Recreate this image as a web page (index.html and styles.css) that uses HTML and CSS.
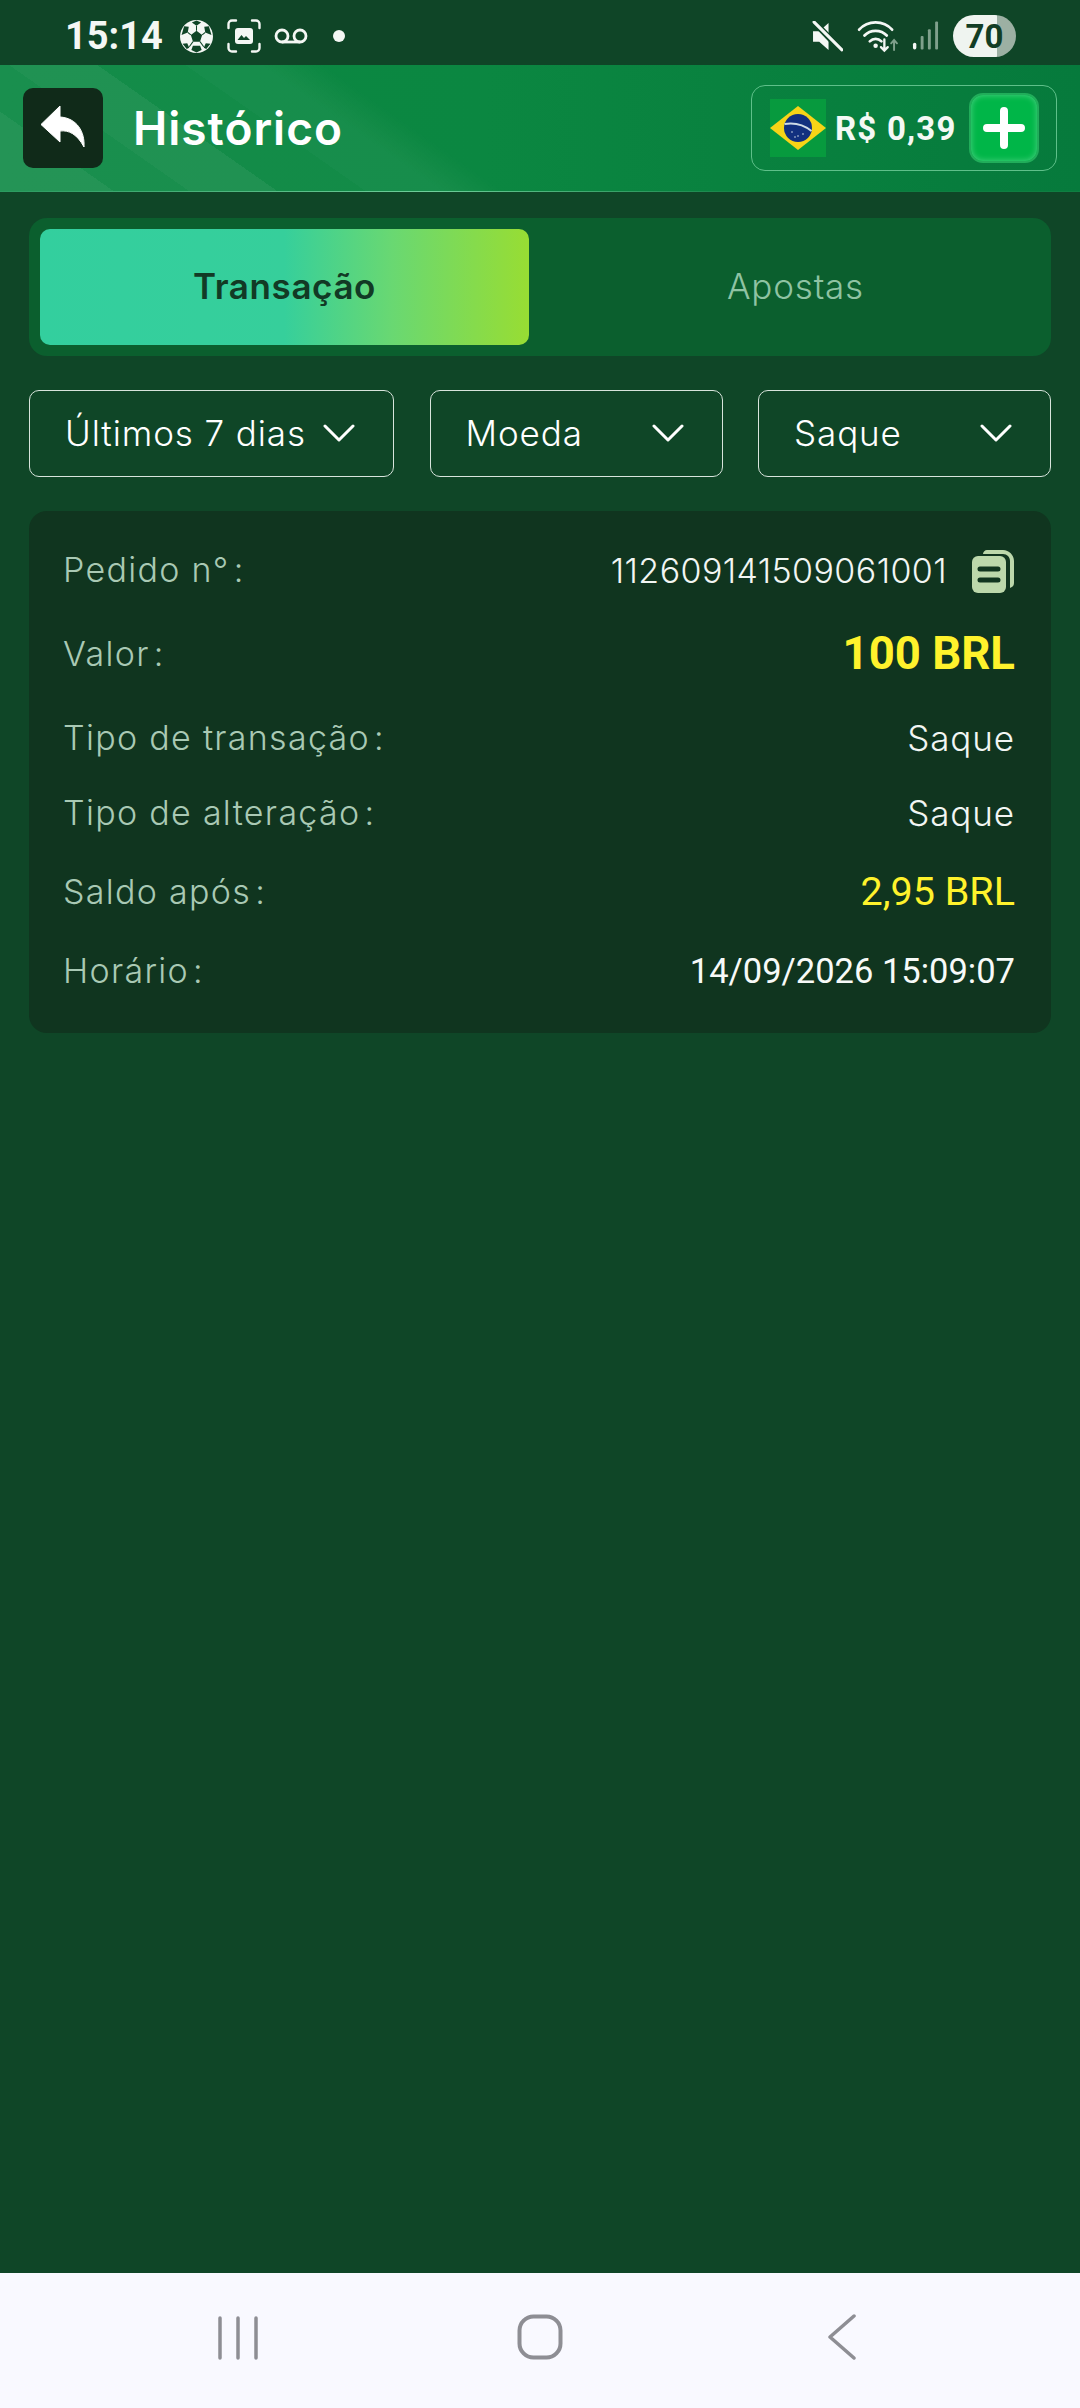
FILE: index.html
```html
<!DOCTYPE html>
<html lang="pt">
<head>
<meta charset="utf-8">
<title>Histórico</title>
<link rel="stylesheet" href="styles.css">
</head>
<body>
<div class="screen">
  <div class="status">
    <div class="status-left">
      <span class="clock">15:14</span>
      <svg class="st-ball" viewBox="0 0 32 32"><circle cx="16" cy="16" r="16" fill="#f4f7f4"/><path d="M16 10.500l5.500 4-2.100 6.500h-6.800l-2.100-6.500zM16 0.500l-4.500 2 4.500 3 4.500-3zM28 6l-4.500.5 1 5.500 6 2.500zM4 6l4.500.5-1 5.500-6 2.500zM11 29l1.500-4h7l1.500 4-5 2.500zM2.500 23l4.500-.5 2 4.500-2.500 1zM29.500 23l-4.500-.5-2 4.500 2.500 1z" fill="#0f4527"/><path d="M16 5.500v5M7.500 12l3 2.500M24.500 12l-3 2.500M12.600 21l-3.600 5M19.400 21l3.600 5" stroke="#0f4527" stroke-width="1"/></svg>
      <svg class="st-shot" viewBox="0 0 34 34" fill="none" stroke="#f4f7f4" stroke-width="2.400" stroke-linecap="round"><path d="M1.500 9V5a3.500 3.500 0 0 1 3.500-3.500h4M25 1.500h4A3.500 3.500 0 0 1 32.500 5v4M32.500 25v4a3.500 3.500 0 0 1-3.500 3.500h-4M9 32.500H5A3.500 3.500 0 0 1 1.500 29v-4"/><rect x="8" y="9" width="18" height="16" rx="3" fill="#f4f7f4" stroke="none"/><path d="M10.500 21l4-5 2.500 3 2-2 4 4z" fill="#0f4527" stroke="none"/></svg>
      <svg class="st-vm" viewBox="0 0 34 16" fill="none" stroke="#f4f7f4" stroke-width="2.800"><circle cx="8" cy="8" r="6"/><circle cx="26" cy="8" r="6"/><path d="M8 14h18"/></svg>
      <span class="st-dot"></span>
    </div>
    <div class="status-right">
      <svg class="st-mute" viewBox="0 0 30 30"><path d="M1 10h6l9-8v26l-9-8H1z" fill="#f4f7f4"/><path d="M3 2l26 27" stroke="#0f4527" stroke-width="6"/><path d="M2 1l27 27" stroke="#f4f7f4" stroke-width="3" stroke-linecap="round"/></svg>
      <svg class="st-wifi" viewBox="0 0 46 34" fill="none" stroke-linecap="round"><path d="M2 10C11 0 27 0 36 10M7.500 16c6-6.500 17-6.500 23 0M13 22c3.500-3.500 8.500-3.500 12 0" stroke="#f4f7f4" stroke-width="2.800"/><circle cx="19" cy="26.500" r="2.300" fill="#f4f7f4"/><path d="M28 20v11M24.500 28l3.500 3.500 3.500-3.500" stroke="#f4f7f4" stroke-width="2.400"/><path d="M38 31V21M35 24l3-3.500 3 3.500" stroke="#7fa08c" stroke-width="2"/></svg>
      <svg class="st-signal" viewBox="0 0 28 30" fill="#7fa08c"><rect x="1" y="22" width="3.500" height="7" rx="1.700" fill="#f4f7f4"/><rect x="9" y="15" width="3" height="14" rx="1"/><rect x="16.500" y="8" width="3" height="21" rx="1"/><rect x="24" y="0" width="3" height="29" rx="1"/></svg>
      <div class="battery"><span class="battery-num">70</span></div>
    </div>
  </div>

  <header class="topbar">
    <div class="topbar-left">
      <button class="back" type="button" aria-label="Voltar">
        <svg viewBox="0 0 46 46" width="46" height="46"><path d="M20 1L1 19.500 20 37V26c9-1 17 3 24 16 1-15-7-29-24-30z" fill="#fff" stroke="#fff" stroke-width="1" stroke-linejoin="round"/></svg>
      </button>
      <h1 class="title">Histórico</h1>
    </div>
    <div class="wallet">
      <svg class="flag" viewBox="0 0 56 58"><rect width="56" height="58" fill="#079a3e"/><path d="M28 7l28 22-28 22L0 29z" fill="#f7d417"/><circle cx="28" cy="29" r="14" fill="#12307f"/><path d="M14.500 25c9-1.500 19 .5 27 7" fill="none" stroke="#cfdbe6" stroke-width="2"/><g fill="#cfdbe6"><circle cx="22" cy="33" r=".8"/><circle cx="28" cy="37" r=".8"/><circle cx="33" cy="35" r=".8"/><circle cx="25" cy="38" r=".8"/></g></svg>
      <span class="wallet-amount">R$ 0,39</span>
      <button class="plus" type="button" aria-label="Adicionar">
        <svg viewBox="0 0 42 42" width="42" height="42"><path d="M21 4v34M4 21h34" stroke="#fff" stroke-width="8" stroke-linecap="round"/></svg>
      </button>
    </div>
  </header>

  <main class="content">
    <div class="tabs">
      <div class="tab tab-active">Transação</div>
      <div class="tab tab-idle">Apostas</div>
    </div>

    <div class="filters">
      <div class="filter filter-a"><span>Últimos 7 dias</span><svg class="chev" viewBox="0 0 32 18"><path d="M2 2l14 14L30 2" fill="none" stroke="#fff" stroke-width="3" stroke-linecap="round" stroke-linejoin="round"/></svg></div>
      <div class="filter filter-b"><span>Moeda</span><svg class="chev" viewBox="0 0 32 18"><path d="M2 2l14 14L30 2" fill="none" stroke="#fff" stroke-width="3" stroke-linecap="round" stroke-linejoin="round"/></svg></div>
      <div class="filter filter-c"><span>Saque</span><svg class="chev" viewBox="0 0 32 18"><path d="M2 2l14 14L30 2" fill="none" stroke="#fff" stroke-width="3" stroke-linecap="round" stroke-linejoin="round"/></svg></div>
    </div>

    <section class="card">
      <div class="row row-1">
        <span class="label">Pedido n°<span class="colon">:</span></span>
        <span class="value order">112609141509061001
          <svg class="copy" viewBox="0 0 44 46"><path d="M16 2h16c6 0 11 5 11 11v22c0 2-1 4-4 5V13c0-4-3-7-7-7H12c0-2 2-4 4-4z" fill="#bcd8ab"/><rect x="1" y="8" width="34" height="37" rx="6" fill="#bcd8ab"/><path d="M9 21h18M9 32h18" stroke="#10351f" stroke-width="5" stroke-linecap="round"/></svg>
        </span>
      </div>
      <div class="row row-2"><span class="label">Valor<span class="colon">:</span></span><span class="value amount">100 BRL</span></div>
      <div class="row row-3"><span class="label">Tipo de transação<span class="colon">:</span></span><span class="value">Saque</span></div>
      <div class="row row-4"><span class="label">Tipo de alteração<span class="colon">:</span></span><span class="value">Saque</span></div>
      <div class="row row-5"><span class="label">Saldo após<span class="colon">:</span></span><span class="value balance">2,95 BRL</span></div>
      <div class="row row-6"><span class="label">Horário<span class="colon">:</span></span><span class="value time">14/09/2026 15:09:07</span></div>
    </section>
  </main>

  <nav class="navbar">
    <svg class="nav-recent" viewBox="0 0 42 44" fill="none" stroke="#8e8e94" stroke-width="3.500" stroke-linecap="round"><path d="M3 2v40M21 2v40M39 2v40"/></svg>
    <svg class="nav-home" viewBox="0 0 46 46" fill="none" stroke="#8e8e94" stroke-width="4"><rect x="2.500" y="2.500" width="41" height="41" rx="14"/></svg>
    <svg class="nav-back" viewBox="0 0 30 46" fill="none" stroke="#8e8e94" stroke-width="3.500" stroke-linecap="round" stroke-linejoin="round"><path d="M27 2L3 23l24 21"/></svg>
  </nav>
</div>
</body>
</html>
```

FILE: styles.css
```css
* { box-sizing: border-box; }
html, body { margin: 0; padding: 0; }
body { font-family: "Inter", "Liberation Sans", sans-serif; background: #0f4627; }
.screen { width: 1080px; height: 2408px; display: flex; flex-direction: column; background: #0f4627; overflow: hidden; }

.status { height: 65px; flex: none; display: flex; justify-content: space-between; align-items: center; padding: 7px 64px 0 65px; background: #0f4527; color: #f4f7f4; }
.status-left, .status-right { display: flex; align-items: center; }
.clock { font: 700 38px/1 "Roboto", sans-serif; width: 115px; }
.st-ball { width: 33px; height: 33px; margin-right: 14px; }
.st-shot { width: 34px; height: 34px; margin-right: 13px; }
.st-vm { width: 34px; height: 16px; margin-right: 25px; }
.st-dot { width: 12px; height: 12px; border-radius: 50%; background: #f4f7f4; }
.st-mute { width: 31px; height: 31px; margin-right: 14px; }
.st-wifi { width: 45px; height: 33px; margin-right: 10px; }
.st-signal { width: 27px; height: 30px; margin-right: 14px; }
.battery { width: 63px; height: 42px; border-radius: 21px; display: flex; align-items: center; justify-content: center; background: linear-gradient(90deg, #eff4f0 0 44px, #9cb0a3 44px); }
.battery-num { font: 700 33px/1 "Roboto", sans-serif; color: #123d25; }

.topbar { height: 127px; flex: none; display: flex; justify-content: space-between; align-items: center; padding: 0 23px 0 23px; border-bottom: 1px solid transparent; border-image: linear-gradient(90deg, #2a9a5f, #6fcf9b 40%, #0f7f42 70%) 1;
  background:
    linear-gradient(35deg, rgba(255,255,255,.10) 0 9%, rgba(255,255,255,.06) 9% 15%, rgba(255,255,255,.085) 15% 22%, rgba(255,255,255,.03) 22% 29%, rgba(255,255,255,.05) 29% 35%, rgba(255,255,255,0) 40%),
    linear-gradient(90deg, #0b8843 0, #0b8741 45%, #067a3c 100%); }
.topbar-left { display: flex; align-items: center; gap: 30px; }
.back { width: 80px; height: 80px; padding: 0; border: 0; border-radius: 10px; background: #102a19; display: flex; align-items: center; justify-content: center; }
.title { margin: 0; font: 600 46px/1 "Inter", sans-serif; color: #fff; letter-spacing: 1px; }
.wallet { width: 306px; height: 86px; display: flex; align-items: center; padding: 0 17px; border: 1px solid #5fc08a; border-radius: 14px; }
.flag { width: 58px; height: 58px; flex: none; margin-right: 8px; }
.wallet-amount { font: 700 33px/1 "Roboto", sans-serif; color: #f4f9f5; letter-spacing: 1.200px; white-space: nowrap; flex: 1; }
.plus { width: 70px; height: 70px; flex: none; padding: 0; border: 2px solid #21ad5a; border-radius: 14px; background: #00b648; box-shadow: inset 0 0 6px #4fd487; display: flex; align-items: center; justify-content: center; }

.content { flex: 1; padding: 26px 29px 0; display: flex; flex-direction: column; }
.tabs { height: 138px; display: flex; padding: 11px; border-radius: 18px; background: #0b5f2e; }
.tab { flex: 1; display: flex; align-items: center; justify-content: center; font-size: 35px; padding-bottom: 2px; color: #8fc3a3; border-radius: 10px; }
.tab-active { flex: none; width: 489px; font-weight: 600; font-size: 35px; letter-spacing: .6px; color: #123a25; background: linear-gradient(90deg, #33cf9e 0, #36cf9b 50%, #69d872 72%, #98dd33 100%); }
.tab-idle { padding-left: 22px; font-weight: 300; letter-spacing: .8px; }

.filters { margin-top: 34px; display: flex; justify-content: space-between; }
.filter { height: 87px; display: flex; align-items: center; justify-content: space-between; padding: 0 38px 2px 35px; border: 1.500px solid #d8e4dc; border-radius: 10px; color: #fff; font-size: 35px; font-weight: 350; letter-spacing: .9px; white-space: nowrap; }
.filter-a { width: 365px; }
.filter-b { width: 293px; }
.filter-c { width: 293px; }
.chev { width: 32px; height: 18px; flex: none; }

.card { margin-top: 34px; height: 522px; padding: 0 36px 0 34px; border-radius: 18px; background: #10351f; display: flex; flex-direction: column; }
.row { display: flex; justify-content: space-between; align-items: center; }
.row-1 { height: 119px; }
.row-2 { height: 48px; }
.row-3 { height: 120px; }
.row-4 { height: 30px; }
.row-5 { height: 128px; }
.row-6 { height: 30px; }
.label { font-size: 34px; font-weight: 350; letter-spacing: 1.300px; color: #a9c9b4; padding-bottom: 2px; }
.colon { margin-left: 4px; }
.value { font-size: 35px; font-weight: 350; letter-spacing: .9px; color: #f2f6f3; white-space: nowrap; display: flex; align-items: center; }
.order { gap: 24px; font-size: 34px; letter-spacing: .4px; font-weight: 300; }
.copy { width: 44px; height: 46px; flex: none; }
.amount { font: 700 45.500px/1 "Roboto", sans-serif; letter-spacing: 0; color: #fff22c; }
.balance { font: 400 39.500px/1 "Roboto", sans-serif; letter-spacing: 0; color: #fff22c; }
.time { font: 400 34.500px/1 "Roboto", sans-serif; letter-spacing: 0; color: #f7faf8; }

.navbar { height: 135px; flex: none; background: #f9f9ff; position: relative; }
.nav-recent { position: absolute; left: 217px; top: 43px; width: 42px; height: 44px; }
.nav-home { position: absolute; left: 517px; top: 41px; width: 46px; height: 46px; }
.nav-back { position: absolute; left: 827px; top: 41px; width: 30px; height: 46px; }
```
